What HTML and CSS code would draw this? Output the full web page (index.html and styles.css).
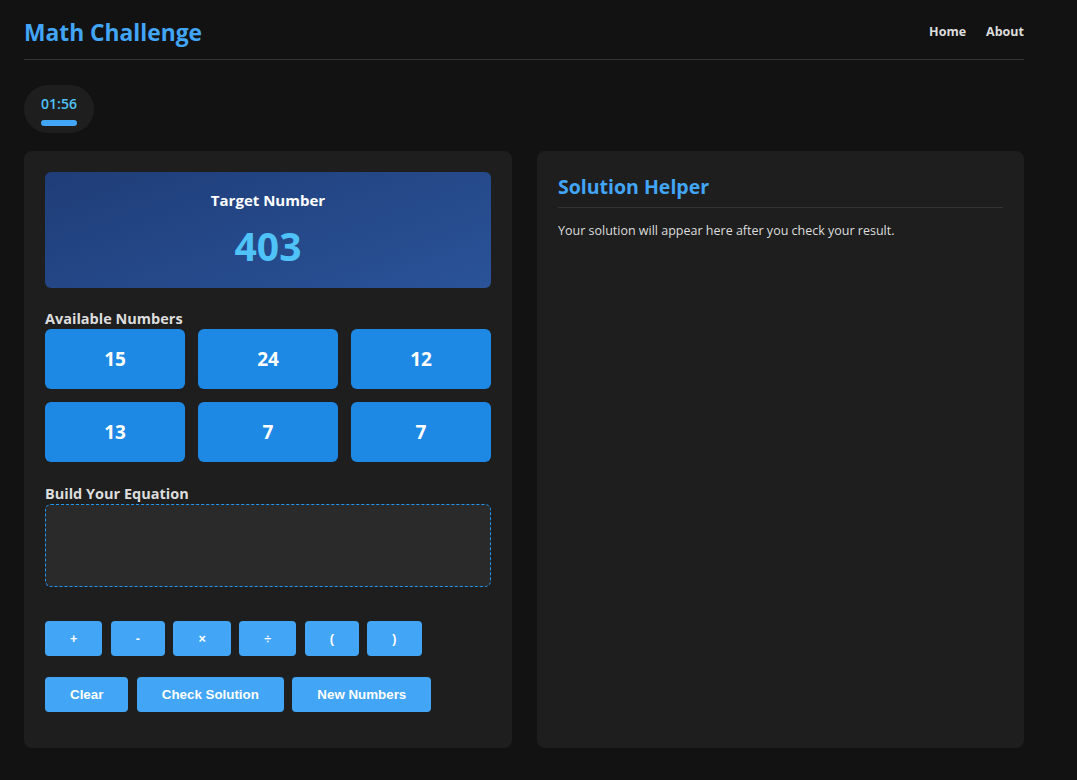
FILE: index.html
```html
<!DOCTYPE html>
<html lang="en">
<head>
<meta charset="utf-8">
<title>Math Challenge</title>
<link rel="stylesheet" href="styles.css">
</head>
<body>
<div class="page">
  <header class="header">
    <h1 class="brand">Math Challenge</h1>
    <nav class="nav">
      <a class="nav-link" href="#">Home</a>
      <a class="nav-link" href="#">About</a>
    </nav>
  </header>

  <div class="timer">
    <div class="timer-text">01:56</div>
    <div class="timer-bar"></div>
  </div>

  <main class="panels">
    <section class="panel">
      <div class="target">
        <div class="target-label">Target Number</div>
        <div class="target-value">403</div>
      </div>

      <div class="section-label label-numbers">Available Numbers</div>
      <div class="numbers">
        <button class="num">15</button>
        <button class="num">24</button>
        <button class="num">12</button>
        <button class="num">13</button>
        <button class="num">7</button>
        <button class="num">7</button>
      </div>

      <div class="section-label label-equation">Build Your Equation</div>
      <div class="equation"></div>

      <div class="ops">
        <button class="btn op">+</button>
        <button class="btn op">-</button>
        <button class="btn op">×</button>
        <button class="btn op">÷</button>
        <button class="btn op">(</button>
        <button class="btn op">)</button>
      </div>

      <div class="actions">
        <button class="btn act">Clear</button>
        <button class="btn act">Check Solution</button>
        <button class="btn act">New Numbers</button>
      </div>
    </section>

    <section class="panel">
      <h2 class="helper-title">Solution Helper</h2>
      <p class="helper-text">Your solution will appear here after you check your result.</p>
    </section>
  </main>
</div>
</body>
</html>
```

FILE: styles.css
```css
* { box-sizing: border-box; }

html, body {
  margin: 0;
  background: #121212;
}

body {
  font-family: "Open Sans", "Noto Sans", sans-serif;
  color: #e0e0e0;
}

.page {
  width: 1000px;
  margin-left: 24px;
}

.header {
  display: flex;
  justify-content: space-between;
  align-items: center;
  padding: 17px 0 10px;
  border-bottom: 1px solid #333;
}

.brand {
  margin: 0;
  font-size: 22.8px;
  line-height: 32px;
  font-weight: 700;
  color: #42a5f5;
}

.nav {
  display: flex;
  gap: 20px;
  padding-bottom: 4px;
}

.nav-link {
  color: #dddddd;
  text-decoration: none;
  font-weight: 700;
  font-size: 12.5px;
}

.timer {
  display: inline-flex;
  flex-direction: column;
  align-items: center;
  margin-top: 25px;
  width: 70px;
  height: 48px;
  padding-top: 10px;
  background: #1e1e1e;
  border-radius: 24px;
}

.timer-text {
  font-size: 14px;
  line-height: 18px;
  font-weight: 600;
  color: #4fc3f7;
}

.timer-bar {
  margin-top: 7px;
  width: 36px;
  height: 6px;
  border-radius: 3px;
  background: #42a5f5;
}

.panels {
  display: grid;
  grid-template-columns: 488px 487px;
  gap: 25px;
  margin-top: 18px;
}

.panel {
  background: #1e1e1e;
  border-radius: 8px;
  padding: 21px 21px 36px;
}

.target {
  background: linear-gradient(160deg, #1f3d78 0%, #2a5398 100%);
  border-radius: 6px;
  padding: 18px 0 20px;
  text-align: center;
}

.target-label {
  font-size: 15px;
  line-height: 20px;
  font-weight: 700;
  color: #ffffff;
}

.target-value {
  margin-top: 14px;
  font-size: 39px;
  line-height: 44px;
  font-weight: 700;
  color: #4fc3f7;
}

.section-label {
  font-size: 14.5px;
  line-height: 20px;
  font-weight: 700;
  color: #dddddd;
}

.label-numbers { margin-top: 21px; }
.label-equation { margin-top: 22px; }

.numbers {
  display: grid;
  grid-template-columns: repeat(3, 1fr);
  gap: 13px 13px;
}

.num {
  height: 60px;
  border: none;
  border-radius: 6px;
  background: #1e88e5;
  color: #ffffff;
  font-family: "Open Sans", "Noto Sans", sans-serif;
  font-size: 19px;
  font-weight: 700;
}

.equation {
  height: 83px;
  background: #2a2a2a;
  border: 1px dashed #2196f3;
  border-radius: 6px;
}

.ops, .actions {
  display: flex;
  gap: 8.5px;
}

.ops { margin-top: 34px; }
.actions { margin-top: 21px; }

.btn {
  height: 35px;
  border: none;
  border-radius: 4px;
  background: #42a5f5;
  color: #ffffff;
  font-family: "Liberation Sans", Arial, sans-serif;
  font-weight: 700;
  padding: 0 25px;
}

.op { font-size: 12.5px; }
.act { font-size: 13.333px; }

.helper-title {
  margin: 0;
  padding-top: 1px;
  font-size: 19.5px;
  line-height: 28px;
  font-weight: 700;
  color: #42a5f5;
  padding-bottom: 6px;
  border-bottom: 1px solid #333;
}

.helper-text {
  margin: 14px 0 0;
  font-size: 12.5px;
  line-height: 18px;
  color: #dddddd;
}
```
